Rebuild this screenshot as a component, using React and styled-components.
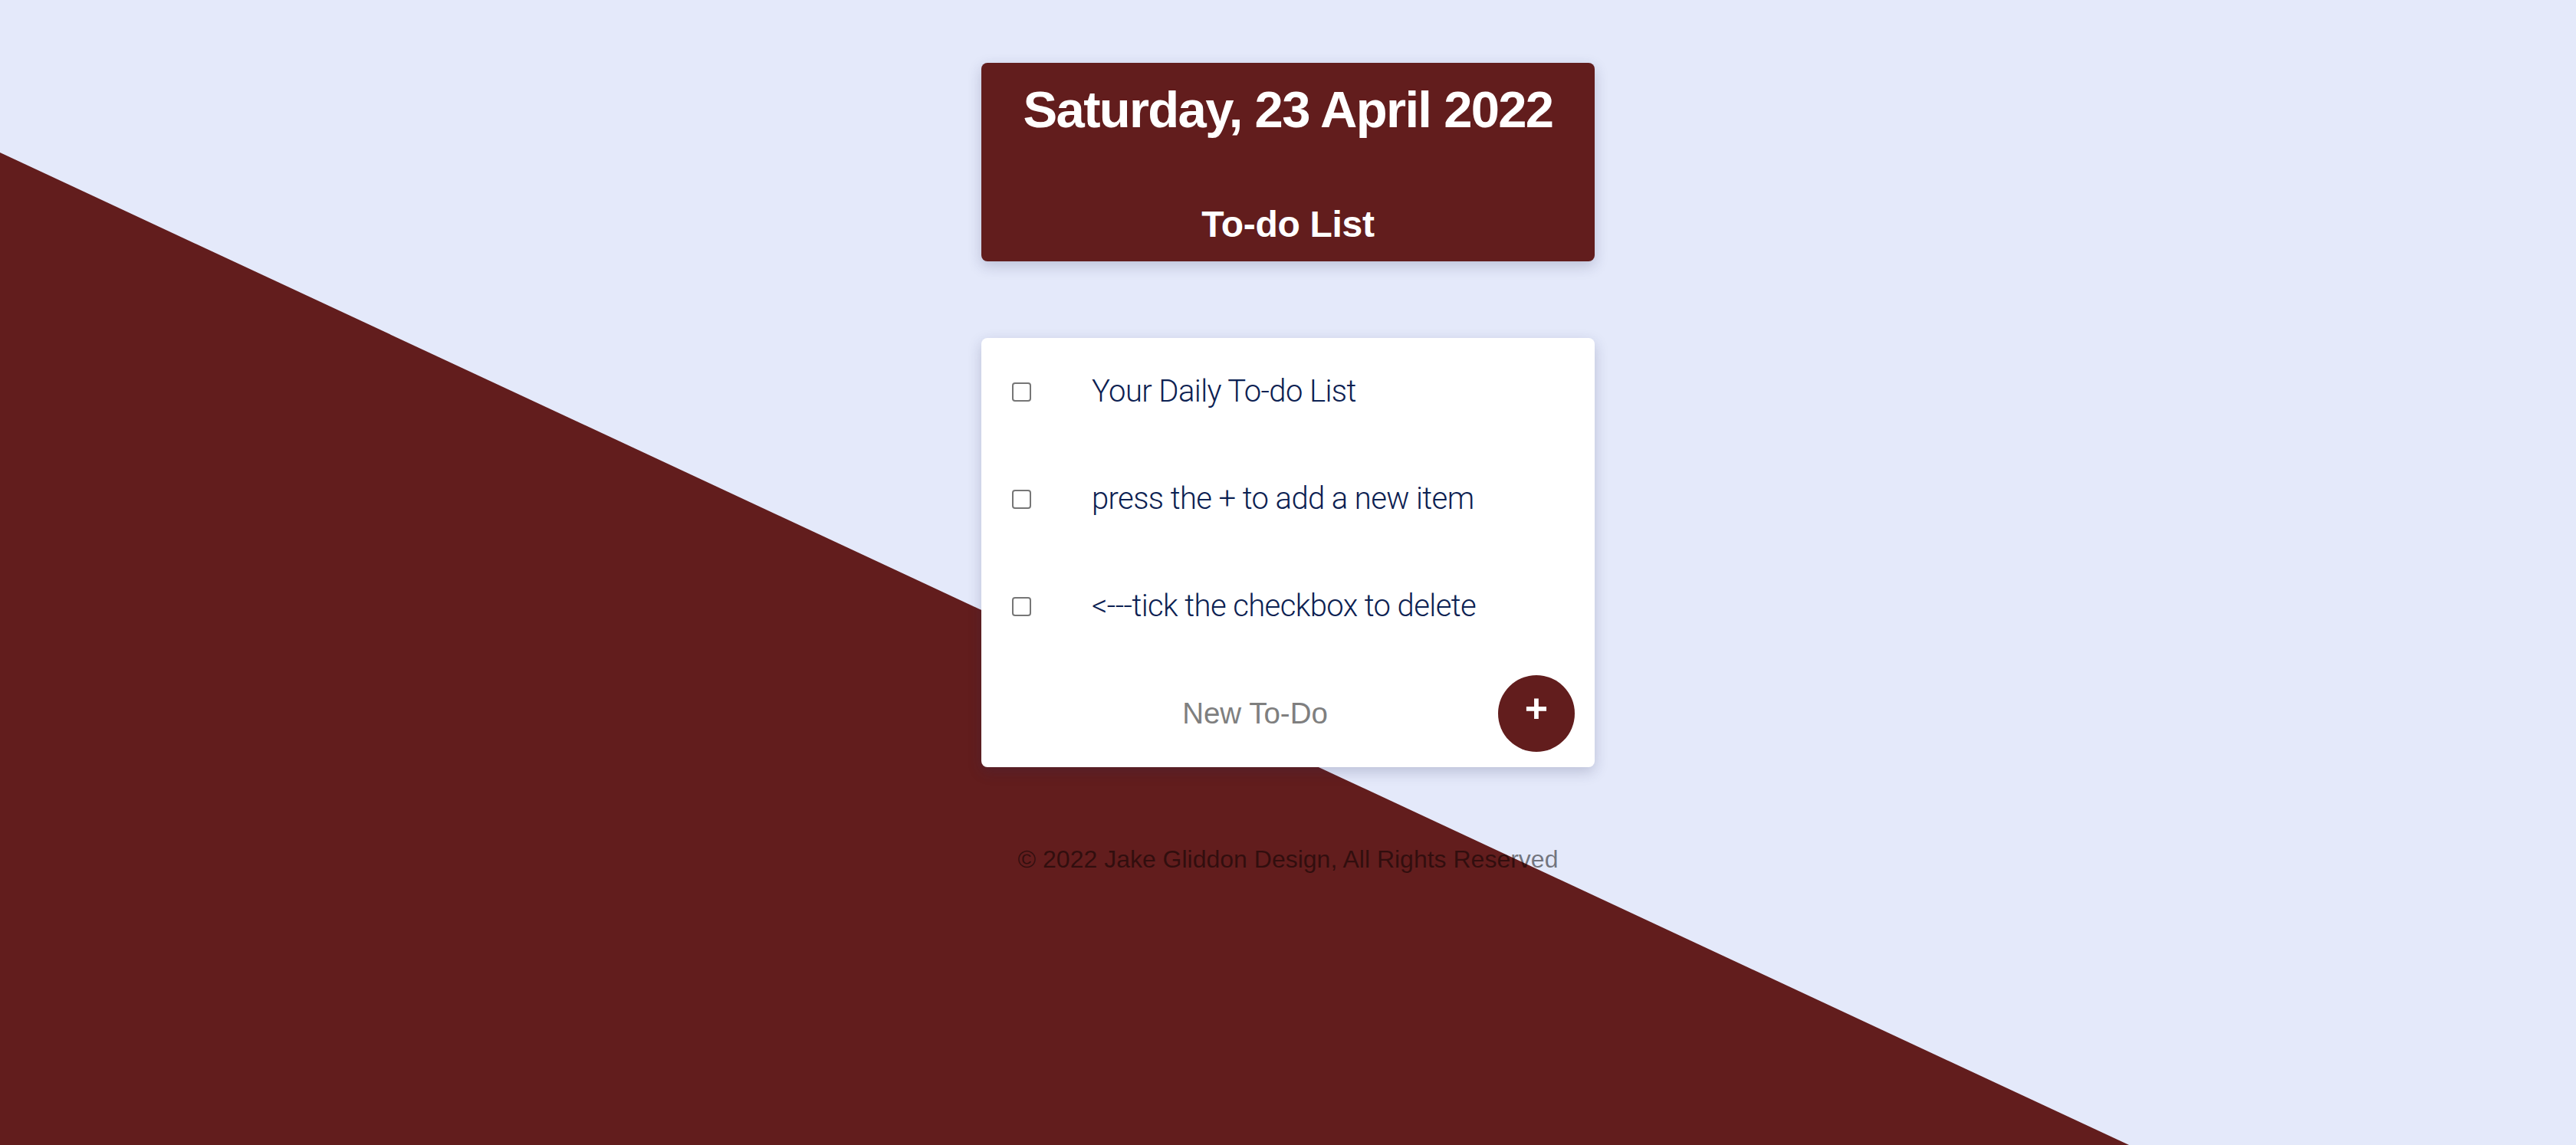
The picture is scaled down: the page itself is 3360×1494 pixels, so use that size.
import React from "react";
import styled, { createGlobalStyle } from "styled-components";

const GlobalStyle = createGlobalStyle`
  html, body {
    margin: 0;
    padding: 0;
  }
  body {
    font-family: "Liberation Sans", Arial, sans-serif;
    background: #e4e9fa;
  }
`;

const maroon = "#621d1d";

const Page = styled.div`
  position: relative;
  min-height: 100vh;
  overflow: hidden;
  background: #e4e9fa;
  display: flex;
  flex-direction: column;
  align-items: center;

  /* diagonal backdrop */
  &::before {
    content: "";
    position: absolute;
    inset: 0;
    background: ${maroon};
    clip-path: polygon(0 199px, 82.65% 100%, 0 100%);
    z-index: 0;
  }
`;

const Content = styled.main`
  position: relative;
  z-index: 1;
  width: 800px;
  display: flex;
  flex-direction: column;
  align-items: stretch;
`;

const Heading = styled.header`
  margin-top: 82px;
  height: 259px;
  box-sizing: border-box;
  padding-top: 27px;
  background: ${maroon};
  border-radius: 8px;
  box-shadow: 0 6px 18px rgba(40, 44, 90, 0.22);
  display: flex;
  flex-direction: column;
  align-items: center;
  color: #fff;
`;

const DateTitle = styled.h1`
  margin: 0;
  font-size: 67px;
  line-height: 1;
  font-weight: 700;
  letter-spacing: -1.7px;
`;

const ListTitle = styled.h2`
  margin: 93px 0 0;
  font-size: 48px;
  line-height: 1;
  font-weight: 700;
  letter-spacing: -0.3px;
`;

const Card = styled.section`
  margin-top: 100px;
  background: #fff;
  border-radius: 8px;
  box-shadow: 0 6px 18px rgba(40, 44, 90, 0.22);
  display: flex;
  flex-direction: column;
`;

const Row = styled.div`
  height: 140px;
  display: flex;
  align-items: center;
  padding-left: 40px;
`;

const Check = styled.input.attrs({ type: "checkbox" })`
  appearance: none;
  width: 25px;
  height: 25px;
  margin: 0 79px 0 0;
  box-sizing: border-box;
  border: 2px solid #767676;
  border-radius: 4px;
  background: #fff;
  flex-shrink: 0;
`;

const ItemText = styled.p`
  margin: 0;
  font-family: Roboto, "Liberation Sans", sans-serif;
  font-weight: 300;
  font-size: 40px;
  line-height: 1;
  letter-spacing: -0.6px;
  color: #0c2152;
`;

const AddForm = styled.form`
  height: 140px;
  display: flex;
  align-items: center;
  padding: 0 26px 0 40px;
`;

const NewInput = styled.input`
  flex: 1;
  min-width: 0;
  border: none;
  outline: none;
  background: transparent;
  text-align: center;
  font-family: "Liberation Sans", Arial, sans-serif;
  font-size: 38.5px;
  color: #0c2152;
  padding: 0;

  &::placeholder {
    color: #7f7f7f;
  }
`;

const AddButton = styled.button`
  width: 100px;
  height: 100px;
  border-radius: 50%;
  border: none;
  background: ${maroon};
  color: #fff;
  display: flex;
  align-items: center;
  justify-content: center;
  padding: 0 0 14px;
  font-family: "Liberation Sans", Arial, sans-serif;
  font-size: 52px;
  font-weight: 700;
  line-height: 1;
  cursor: pointer;
`;

const Footer = styled.footer`
  margin-top: 104px;
  text-align: center;
  font-size: 32px;
  line-height: 1;
  color: rgba(0, 0, 0, 0.5);
`;

const items = [
  "Your Daily To-do List",
  "press the + to add a new item",
  "<---tick the checkbox to delete",
];

export default function App() {
  return (
    <>
      <GlobalStyle />
      <Page>
        <Content>
          <Heading>
            <DateTitle>Saturday, 23 April 2022</DateTitle>
            <ListTitle>To-do List</ListTitle>
          </Heading>
          <Card>
            {items.map((item) => (
              <Row key={item}>
                <Check />
                <ItemText>{item}</ItemText>
              </Row>
            ))}
            <AddForm onSubmit={(e) => e.preventDefault()}>
              <NewInput placeholder="New To-Do" />
              <AddButton type="submit">+</AddButton>
            </AddForm>
          </Card>
          <Footer>© 2022 Jake Gliddon Design, All Rights Reserved</Footer>
        </Content>
      </Page>
    </>
  );
}
